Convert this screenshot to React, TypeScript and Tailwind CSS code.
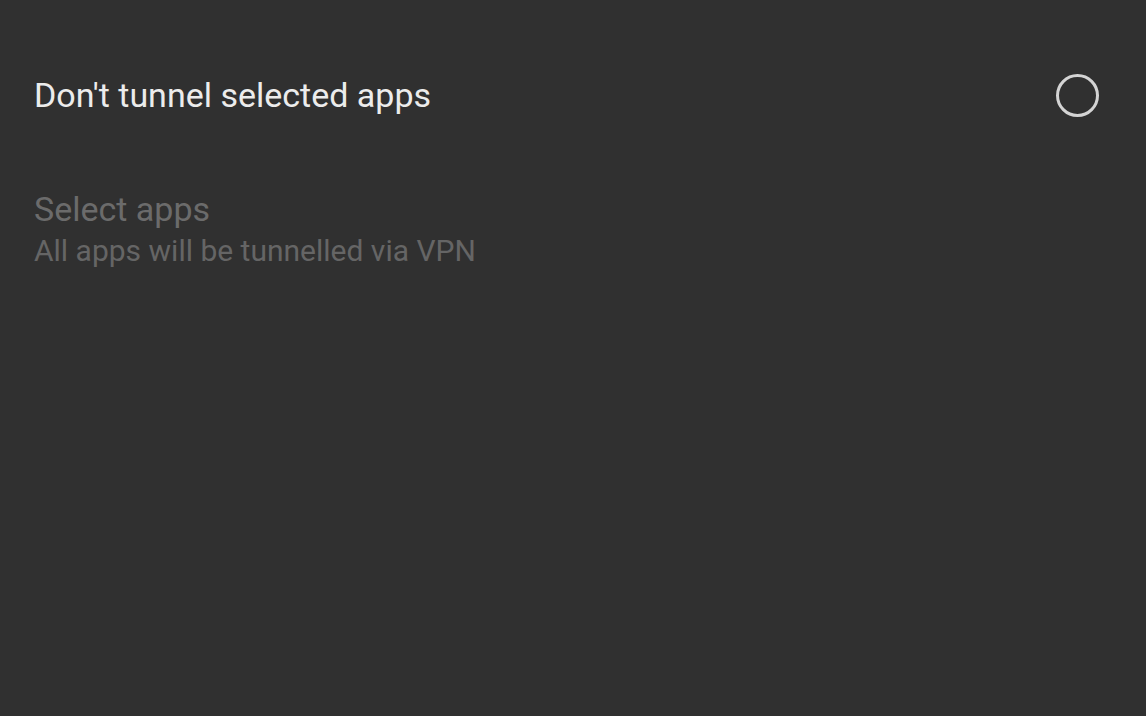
import React from "react";

export default function App() {
  return (
    <div
      className="w-[1146px] h-[716px] bg-[#303030] overflow-hidden"
      style={{ fontFamily: "Roboto, 'Noto Sans', sans-serif" }}
    >
      <div className="flex items-center justify-between pl-[34px] pr-[47px] pt-[72px]">
        <span className="text-[34px] leading-[46px] text-[#ececec]">Don't tunnel selected apps</span>
        <div className="w-[43px] h-[43px] rounded-full border-[3px] border-[#d4d4d4]" />
      </div>
      <div className="flex flex-col pl-[34px] pt-[71px]">
        <span className="text-[34px] leading-[40px] text-[#6b6b6b]">Select apps</span>
        <span className="text-[30px] leading-[44px] text-[#656565]">All apps will be tunnelled via VPN</span>
      </div>
    </div>
  );
}
